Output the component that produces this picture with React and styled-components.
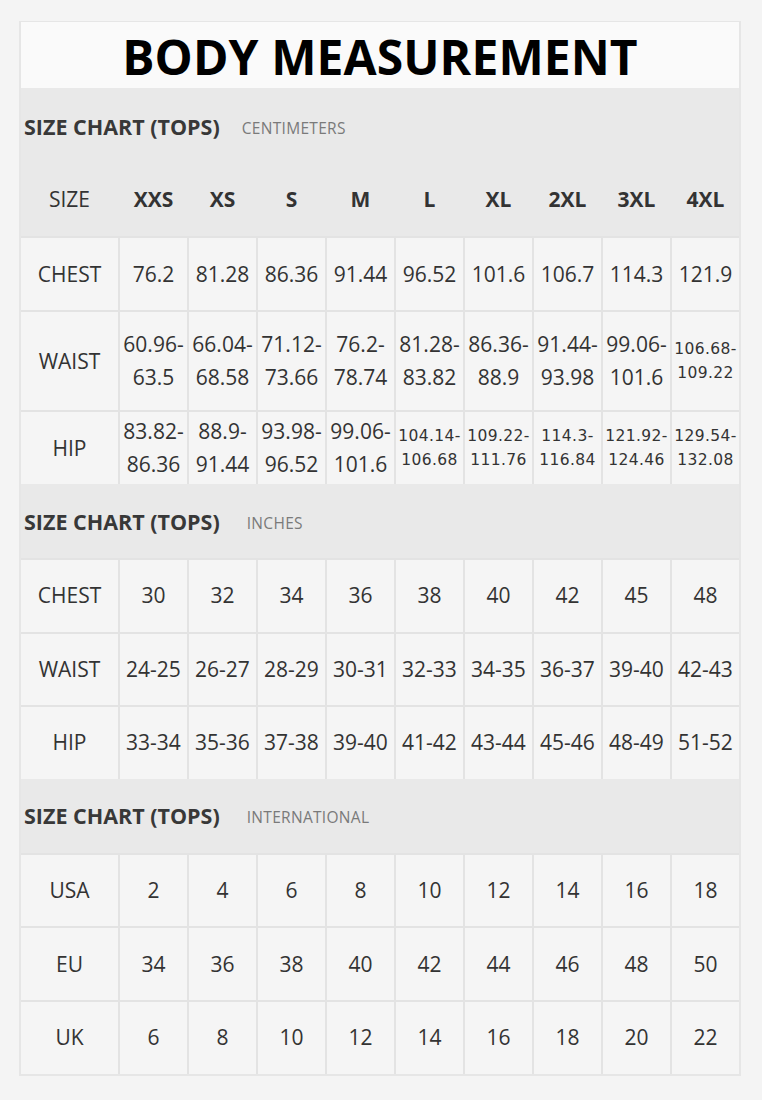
import React from 'react';
import styled, { createGlobalStyle } from 'styled-components';

const GlobalStyle = createGlobalStyle`
  body {
    margin: 0;
    background: #f4f4f4;
    font-family: 'Open Sans', 'Liberation Sans', sans-serif;
    color: #333;
  }
`;

const sizes = ['XXS', 'XS', 'S', 'M', 'L', 'XL', '2XL', '3XL', '4XL'];

const sections = [
  {
    unit: 'CENTIMETERS',
    unitGap: 22,
    showSizes: true,
    rows: [
      { label: 'CHEST', values: ['76.2', '81.28', '86.36', '91.44', '96.52', '101.6', '106.7', '114.3', '121.9'] },
      {
        label: 'WAIST',
        tall: true,
        values: [
          ['60.96-', '63.5'],
          ['66.04-', '68.58'],
          ['71.12-', '73.66'],
          ['76.2-', '78.74'],
          ['81.28-', '83.82'],
          ['86.36-', '88.9'],
          ['91.44-', '93.98'],
          ['99.06-', '101.6'],
          { small: true, lines: ['106.68-', '109.22'] },
        ],
      },
      {
        label: 'HIP',
        values: [
          ['83.82-', '86.36'],
          ['88.9-', '91.44'],
          ['93.98-', '96.52'],
          ['99.06-', '101.6'],
          { small: true, lines: ['104.14-', '106.68'] },
          { small: true, lines: ['109.22-', '111.76'] },
          { small: true, lines: ['114.3-', '116.84'] },
          { small: true, lines: ['121.92-', '124.46'] },
          { small: true, lines: ['129.54-', '132.08'] },
        ],
      },
    ],
  },
  {
    unit: 'INCHES',
    unitGap: 27,
    rows: [
      { label: 'CHEST', values: ['30', '32', '34', '36', '38', '40', '42', '45', '48'] },
      { label: 'WAIST', values: ['24-25', '26-27', '28-29', '30-31', '32-33', '34-35', '36-37', '39-40', '42-43'] },
      { label: 'HIP', values: ['33-34', '35-36', '37-38', '39-40', '41-42', '43-44', '45-46', '48-49', '51-52'] },
    ],
  },
  {
    unit: 'INTERNATIONAL',
    unitGap: 27,
    rows: [
      { label: 'USA', values: ['2', '4', '6', '8', '10', '12', '14', '16', '18'] },
      { label: 'EU', values: ['34', '36', '38', '40', '42', '44', '46', '48', '50'] },
      { label: 'UK', values: ['6', '8', '10', '12', '14', '16', '18', '20', '22'] },
    ],
  },
];

const Frame = styled.div`
  width: 718px;
  margin: 21px 0 0 19px;
  border: 2px solid #e6e6e6;
  border-top: 1px solid #e6e6e6;
  background: #f5f5f5;
`;

const Title = styled.h1`
  margin: 0;
  height: 66px;
  background: #fafafa;
  display: flex;
  align-items: center;
  justify-content: center;
  padding-top: 2px;
  box-sizing: border-box;
  font-size: 48px;
  font-weight: 700;
  color: #000;
  letter-spacing: 0.1px;
`;

const SectionHead = styled.div`
  background: #e9e9e9;
`;

const SectionTitle = styled.div`
  height: 74px;
  display: flex;
  align-items: center;
  padding-left: 3px;
  padding-top: ${({ $first }) => ($first ? '2px' : '0')};
  box-sizing: border-box;
`;

const ChartName = styled.span`
  font-size: 21.5px;
  font-weight: 700;
  color: #383838;
`;

const Unit = styled.span`
  margin-left: ${({ $gap }) => $gap}px;
  font-size: 15.5px;
  color: #7a7a7a;
  letter-spacing: 0.3px;
  padding-top: 3px;
`;

const Row = styled.div`
  display: grid;
  grid-template-columns: 97px repeat(9, 67px);
  column-gap: 2px;
  height: ${({ $tall, $h }) => ($tall ? 100 : $h || 74)}px;
  box-sizing: border-box;
  border-top: ${({ $head }) => ($head ? 'none' : '2px solid #e3e3e3')};
  background: ${({ $head }) => ($head ? 'transparent' : '#e3e3e3')};
`;

const Cell = styled.div`
  display: flex;
  flex-direction: column;
  align-items: center;
  justify-content: center;
  background: ${({ $head }) => ($head ? 'transparent' : '#f5f5f5')};
  font-family: ${({ $small }) =>
    $small ? "'DejaVu Sans', 'Verdana', sans-serif" : "'Open Sans', sans-serif"};
  font-size: ${({ $small }) => ($small ? '15.5px' : '21px')};
  line-height: ${({ $small }) => ($small ? '24px' : '33px')};
  font-weight: ${({ $bold }) => ($bold ? 700 : 400)};
  color: #333;
  white-space: nowrap;
  letter-spacing: ${({ $small }) => ($small ? '0.4px' : '0')};
`;

const Line = styled.span`
  display: block;
`;

function Value({ value }) {
  if (typeof value === 'string') return <Cell>{value}</Cell>;
  const small = !Array.isArray(value) && value.small;
  const lines = Array.isArray(value) ? value : value.lines;
  return (
    <Cell $small={small}>
      {lines.map((l) => (
        <Line key={l}>{l}</Line>
      ))}
    </Cell>
  );
}

function Section({ section, first }) {
  // later sections sit a touch tighter than the first one
  const h = first ? 74 : 73.6;
  return (
    <>
      <SectionHead>
        <SectionTitle $first={first}>
          <ChartName>SIZE CHART (TOPS)</ChartName>
          <Unit $gap={section.unitGap}>{section.unit}</Unit>
        </SectionTitle>
        {section.showSizes && (
          <Row $head>
            <Cell $head>SIZE</Cell>
            {sizes.map((s) => (
              <Cell $head $bold key={s}>
                {s}
              </Cell>
            ))}
          </Row>
        )}
      </SectionHead>
      {section.rows.map((row) => (
        <Row key={row.label} $tall={row.tall} $h={h}>
          <Cell>{row.label}</Cell>
          {row.values.map((v, i) => (
            <Value value={v} key={i} />
          ))}
        </Row>
      ))}
    </>
  );
}

export default function App() {
  return (
    <>
      <GlobalStyle />
      <Frame>
        <Title>BODY MEASUREMENT</Title>
        {sections.map((s, i) => (
          <Section section={s} first={i === 0} key={s.unit} />
        ))}
      </Frame>
    </>
  );
}
